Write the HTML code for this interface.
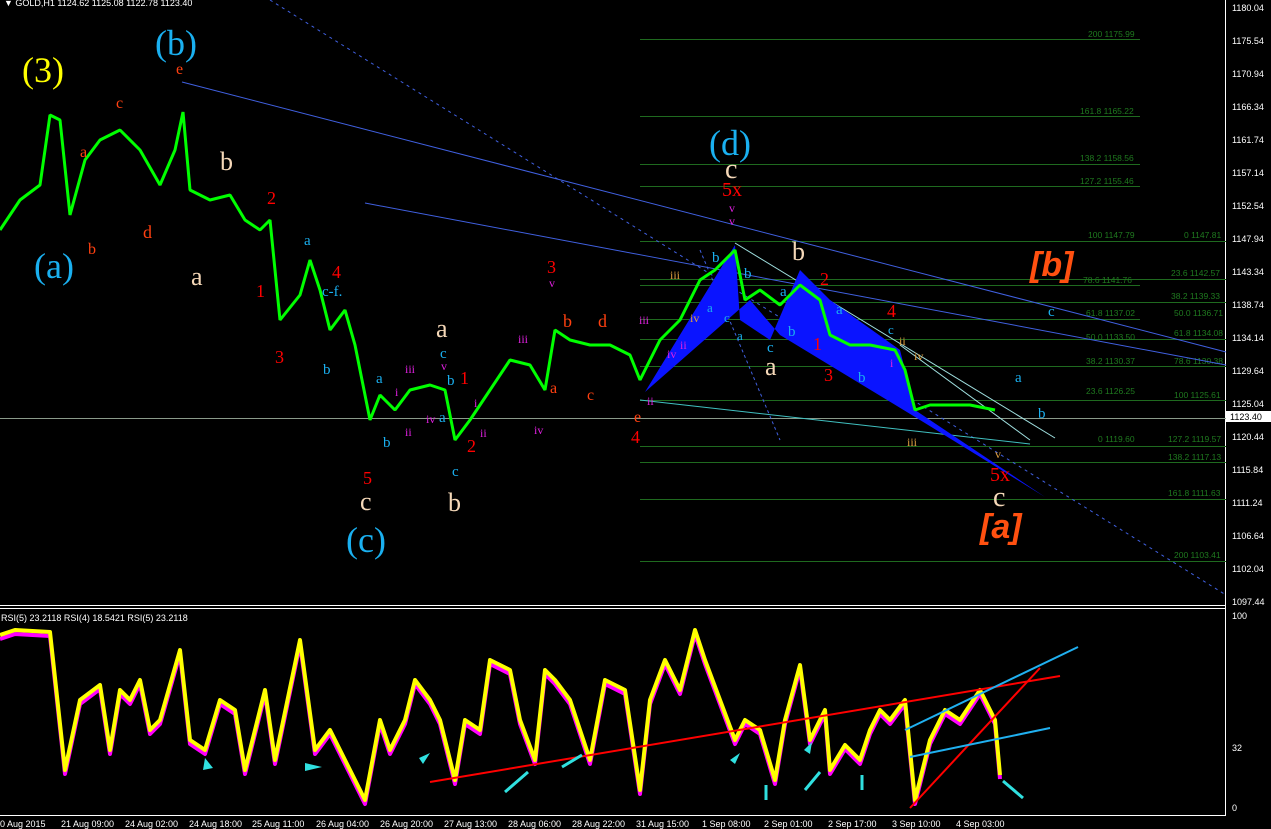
<!DOCTYPE html>
<html><head><meta charset="utf-8"><style>
html,body{margin:0;padding:0;background:#000;width:1271px;height:829px;overflow:hidden}
svg{display:block}
text{font-family:"Liberation Sans",sans-serif}
.ax{fill:#fff;font-size:9px}
.fb text{fill:#1f7a1f;font-size:8.5px}
.s text{font-family:"Liberation Serif",serif}
</style></head><body>
<svg width="1271" height="829" viewBox="0 0 1271 829">
<line x1="1225.5" y1="0" x2="1225.5" y2="815" stroke="#fff"/>
<line x1="0" y1="605.5" x2="1226" y2="605.5" stroke="#fff"/>
<line x1="0" y1="608.5" x2="1226" y2="608.5" stroke="#fff"/>
<line x1="0" y1="815.5" x2="1226" y2="815.5" stroke="#fff"/>
<text x="4" y="6" fill="#fff" font-size="9">▼ GOLD,H1  1124.62 1125.08 1122.78 1123.40</text>
<g class="ax">
<text x="1232" y="11">1180.04</text><text x="1232" y="44">1175.54</text><text x="1232" y="77">1170.94</text><text x="1232" y="110">1166.34</text><text x="1232" y="143">1161.74</text><text x="1232" y="176">1157.14</text><text x="1232" y="209">1152.54</text><text x="1232" y="242">1147.94</text><text x="1232" y="275">1143.34</text><text x="1232" y="308">1138.74</text><text x="1232" y="341">1134.14</text><text x="1232" y="374">1129.64</text><text x="1232" y="407">1125.04</text><text x="1232" y="440">1120.44</text><text x="1232" y="473">1115.84</text><text x="1232" y="506">1111.24</text><text x="1232" y="539">1106.64</text><text x="1232" y="572">1102.04</text><text x="1232" y="605">1097.44</text>
<text x="1232" y="619">100</text><text x="1232" y="751">32</text><text x="1232" y="811">0</text>
</g>
<rect x="1226" y="411" width="45" height="11" fill="#fff"/><text x="1230" y="420" font-size="9" fill="#000">1123.40</text>
<line x1="0" y1="418.5" x2="1226" y2="418.5" stroke="#8a9a8a" stroke-width="1"/>
<g stroke="#1f6a1f" stroke-width="1">
<line x1="640" y1="39.5" x2="1140" y2="39.5"/><line x1="640" y1="116.5" x2="1140" y2="116.5"/><line x1="640" y1="164.5" x2="1140" y2="164.5"/><line x1="640" y1="186.5" x2="1140" y2="186.5"/><line x1="640" y1="241.5" x2="1226" y2="241.5"/><line x1="640" y1="279.5" x2="1226" y2="279.5"/><line x1="640" y1="285.5" x2="1140" y2="285.5"/><line x1="640" y1="302.5" x2="1226" y2="302.5"/><line x1="640" y1="319.5" x2="1140" y2="319.5"/><line x1="640" y1="339.5" x2="1226" y2="339.5"/><line x1="640" y1="366.5" x2="1226" y2="366.5"/><line x1="640" y1="400.5" x2="1226" y2="400.5"/><line x1="640" y1="446.5" x2="1226" y2="446.5"/><line x1="640" y1="462.5" x2="1226" y2="462.5"/><line x1="640" y1="499.5" x2="1226" y2="499.5"/><line x1="640" y1="561.5" x2="1226" y2="561.5"/>
</g>
<g class="fb">
<text x="1088" y="37">200 1175.99</text><text x="1080" y="114">161.8 1165.22</text><text x="1080" y="161">138.2 1158.56</text><text x="1080" y="184">127.2 1155.46</text><text x="1088" y="238">100 1147.79</text><text x="1184" y="238">0 1147.81</text><text x="1083" y="283">78.6 1141.76</text><text x="1171" y="276">23.6 1142.57</text><text x="1171" y="299">38.2 1139.33</text><text x="1086" y="316">61.8 1137.02</text><text x="1174" y="316">50.0 1136.71</text><text x="1086" y="340">50.0 1133.50</text><text x="1174" y="336">61.8 1134.08</text><text x="1086" y="364">38.2 1130.37</text><text x="1174" y="364">78.6 1130.38</text><text x="1086" y="394">23.6 1126.25</text><text x="1174" y="398">100 1125.61</text><text x="1098" y="442">0 1119.60</text><text x="1168" y="442">127.2 1119.57</text><text x="1168" y="460">138.2 1117.13</text><text x="1168" y="496">161.8 1111.63</text><text x="1174" y="558">200 1103.41</text>
</g>
<g stroke="#4060e0" stroke-width="1" fill="none">
<line x1="182" y1="82" x2="1226" y2="352"/>
<line x1="365" y1="203" x2="1226" y2="365"/>
<line x1="270" y1="0" x2="1226" y2="595" stroke-dasharray="3,4"/>
<line x1="640" y1="400" x2="1030" y2="444" stroke="#40c0c0"/>
<line x1="735" y1="243" x2="1055" y2="438" stroke="#a0e0e0"/>
<line x1="900" y1="345" x2="1030" y2="440" stroke="#a0e0e0"/>
<line x1="700" y1="250" x2="780" y2="440" stroke-dasharray="3,3"/>
</g>
<g fill="#0a14ff">
<polygon points="645,392 735,245 740,320 770,340 800,270 830,300 900,350 915,410 1045,497 920,420 780,335 750,300"/>
</g>
<polyline fill="none" stroke="#00ff00" stroke-width="3" stroke-linejoin="bevel" points="0,230 20,200 40,185 50,115 60,120 70,215 85,160 100,140 120,130 140,150 160,185 175,150 183,112 190,190 210,200 230,195 245,220 260,230 270,220 280,320 300,295 310,260 320,290 330,330 345,310 355,345 370,420 380,395 395,410 410,390 430,385 445,390 455,440 470,420 490,390 510,360 530,365 545,390 555,330 570,340 590,345 610,345 630,355 640,380 660,340 680,320 700,280 715,270 735,250 745,300 760,290 780,305 800,285 820,300 830,335 850,345 870,345 895,350 905,370 915,410 930,405 950,405 970,405 995,410"/>
<g class="s">
<text x="22" y="82" fill="#ffff00" font-size="36">(3)</text>
<text x="155" y="55" fill="#1ab0f0" font-size="36">(b)</text>
<text x="34" y="278" fill="#1ab0f0" font-size="36">(a)</text>
<text x="346" y="552" fill="#1ab0f0" font-size="36">(c)</text>
<text x="709" y="155" fill="#1ab0f0" font-size="36">(d)</text>
<text x="176" y="74" fill="#ff4010" font-size="16">e</text>
<text x="116" y="108" fill="#ff4010" font-size="16">c</text>
<text x="80" y="157" fill="#ff4010" font-size="16">a</text>
<text x="88" y="254" fill="#ff4010" font-size="16">b</text>
<text x="143" y="238" fill="#ff4010" font-size="18">d</text>
<text x="220" y="170" fill="#f5d8b8" font-size="26">b</text>
<text x="191" y="285" fill="#f5d8b8" font-size="26">a</text>
<text x="267" y="204" fill="#f00" font-size="18">2</text>
<text x="256" y="297" fill="#f00" font-size="18">1</text>
<text x="275" y="363" fill="#f00" font-size="18">3</text>
<text x="332" y="278" fill="#f00" font-size="18">4</text>
<text x="363" y="484" fill="#f00" font-size="18">5</text>
<text x="360" y="510" fill="#f5d8b8" font-size="26">c</text>
<text x="448" y="511" fill="#f5d8b8" font-size="26">b</text>
<text x="436" y="337" fill="#f5d8b8" font-size="26">a</text>
<text x="460" y="384" fill="#f00" font-size="18">1</text>
<text x="467" y="452" fill="#f00" font-size="18">2</text>
<text x="547" y="273" fill="#f00" font-size="18">3</text>
<text x="631" y="443" fill="#f00" font-size="18">4</text>
<text x="722" y="196" fill="#f00" font-size="20">5x</text>
<text x="725" y="178" fill="#f5d8b8" font-size="28">c</text>
<text x="792" y="260" fill="#f5d8b8" font-size="26">b</text>
<text x="765" y="375" fill="#f5d8b8" font-size="26">a</text>
<text x="820" y="285" fill="#f00" font-size="18">2</text>
<text x="813" y="350" fill="#f00" font-size="18">1</text>
<text x="824" y="381" fill="#f00" font-size="18">3</text>
<text x="887" y="317" fill="#f00" font-size="18">4</text>
<text x="990" y="481" fill="#f00" font-size="20">5x</text>
<text x="993" y="506" fill="#f5d8b8" font-size="28">c</text>
<text x="563" y="327" fill="#ff4010" font-size="18">b</text>
<text x="598" y="327" fill="#ff4010" font-size="18">d</text>
<text x="550" y="393" fill="#ff4010" font-size="16">a</text>
<text x="587" y="400" fill="#ff4010" font-size="16">c</text>
<text x="634" y="422" fill="#ff4010" font-size="16">e</text>
<text x="322" y="296" fill="#1ab0f0" font-size="15">c-f.</text>
<text x="304" y="245" fill="#1ab0f0" font-size="15">a</text>
<text x="323" y="374" fill="#1ab0f0" font-size="15">b</text>
<text x="376" y="383" fill="#1ab0f0" font-size="15">a</text>
<text x="383" y="447" fill="#1ab0f0" font-size="15">b</text>
<text x="440" y="358" fill="#1ab0f0" font-size="15">c</text>
<text x="447" y="385" fill="#1ab0f0" font-size="15">b</text>
<text x="439" y="422" fill="#1ab0f0" font-size="15">a</text>
<text x="452" y="476" fill="#1ab0f0" font-size="15">c</text>
<text x="1048" y="316" fill="#1ab0f0" font-size="15">c</text>
<text x="1015" y="382" fill="#1ab0f0" font-size="15">a</text>
<text x="1038" y="418" fill="#1ab0f0" font-size="15">b</text>
<text x="858" y="382" fill="#1ab0f0" font-size="15">b</text>
<text x="788" y="336" fill="#1ab0f0" font-size="15">b</text>
<text x="767" y="352" fill="#1ab0f0" font-size="15">c</text>
<text x="888" y="334" fill="#1ab0f0" font-size="13">c</text>
<text x="780" y="296" fill="#1ab0f0" font-size="15">a</text>
<text x="836" y="314" fill="#1ab0f0" font-size="15">a</text>
<text x="712" y="262" fill="#1ab0f0" font-size="15">b</text>
<text x="744" y="278" fill="#1ab0f0" font-size="15">b</text>
<text x="707" y="312" fill="#1ab0f0" font-size="13">a</text>
<text x="724" y="322" fill="#1ab0f0" font-size="13">c</text>
<text x="737" y="340" fill="#1ab0f0" font-size="13">a</text>
<text x="405" y="373" fill="#e020e0" font-size="12">iii</text><text x="395" y="396" fill="#e020e0" font-size="12">i</text><text x="405" y="436" fill="#e020e0" font-size="12">ii</text><text x="426" y="423" fill="#e020e0" font-size="12">iv</text><text x="441" y="370" fill="#e020e0" font-size="12">v</text><text x="474" y="407" fill="#e020e0" font-size="12">i</text><text x="480" y="437" fill="#e020e0" font-size="12">ii</text><text x="518" y="343" fill="#e020e0" font-size="12">iii</text><text x="534" y="434" fill="#e020e0" font-size="12">iv</text><text x="549" y="287" fill="#e020e0" font-size="12">v</text><text x="639" y="324" fill="#e020e0" font-size="12">iii</text><text x="647" y="405" fill="#e020e0" font-size="12">ii</text><text x="667" y="358" fill="#e020e0" font-size="12">iv</text><text x="680" y="349" fill="#e020e0" font-size="12">ii</text><text x="729" y="212" fill="#e020e0" font-size="12">v</text><text x="729" y="225" fill="#e020e0" font-size="12">v</text><text x="890" y="367" fill="#e020e0" font-size="12">i</text>
<text x="670" y="279" fill="#e0a040" font-size="12">iii</text><text x="907" y="446" fill="#e0a040" font-size="12">iii</text><text x="914" y="360" fill="#e0a040" font-size="12">iv</text><text x="995" y="458" fill="#e0a040" font-size="12">v</text><text x="690" y="322" fill="#e0a040" font-size="12">iv</text><text x="899" y="345" fill="#e0a040" font-size="12">ii</text>
</g>
<text x="1030" y="276" fill="#ff5010" font-size="34" font-style="italic" font-weight="bold">[b]</text>
<text x="980" y="538" fill="#ff5010" font-size="34" font-style="italic" font-weight="bold">[a]</text>
<text x="1" y="621" fill="#fff" font-size="9">RSI(5) 23.2118  RSI(4) 18.5421  RSI(5) 23.2118</text>
<polyline fill="none" stroke="#ff00ff" stroke-width="4" stroke-linejoin="round" transform="translate(0,4)" points="0,635 15,630 50,632 65,770 80,700 100,685 110,750 120,690 130,700 140,680 150,730 160,720 180,650 190,740 205,750 220,700 235,710 245,770 255,730 265,690 275,760 300,640 315,750 330,730 345,760 365,800 380,720 390,750 405,720 415,680 430,700 440,720 455,780 465,720 480,730 490,660 510,670 520,720 535,760 545,670 555,680 570,700 590,760 605,680 625,690 640,790 650,700 665,660 680,690 695,630 705,660 720,700 735,740 745,720 760,730 775,780 785,720 800,665 810,740 825,710 830,770 845,745 860,760 870,730 880,710 890,720 905,700 915,800 930,740 945,710 960,720 980,690 995,720 1000,775"/>
<polyline fill="none" stroke="#ffff00" stroke-width="4" stroke-linejoin="round" points="0,635 15,630 50,632 65,770 80,700 100,685 110,750 120,690 130,700 140,680 150,730 160,720 180,650 190,740 205,750 220,700 235,710 245,770 255,730 265,690 275,760 300,640 315,750 330,730 345,760 365,800 380,720 390,750 405,720 415,680 430,700 440,720 455,780 465,720 480,730 490,660 510,670 520,720 535,760 545,670 555,680 570,700 590,760 605,680 625,690 640,790 650,700 665,660 680,690 695,630 705,660 720,700 735,740 745,720 760,730 775,780 785,720 800,665 810,740 825,710 830,770 845,745 860,760 870,730 880,710 890,720 905,700 915,800 930,740 945,710 960,720 980,690 995,720 1000,775"/>
<g stroke-width="2" fill="none">
<line x1="430" y1="782" x2="1060" y2="676" stroke="#f00"/>
<line x1="910" y1="808" x2="1040" y2="668" stroke="#f00"/>
<line x1="905" y1="730" x2="1078" y2="647" stroke="#20b0f0"/>
<line x1="910" y1="757" x2="1050" y2="728" stroke="#20b0f0"/>
<g stroke="#30e0e0" stroke-width="3"><line x1="505" y1="792" x2="528" y2="772"/><line x1="562" y1="767" x2="582" y2="755"/><line x1="766" y1="800" x2="766" y2="785"/><line x1="805" y1="790" x2="820" y2="772"/><line x1="862" y1="790" x2="862" y2="775"/><line x1="1023" y1="798" x2="1003" y2="781"/></g>
</g>
<g fill="#30e0e0"><polygon points="205,758 213,768 203,770"/><polygon points="305,763 322,767 305,771"/><polygon points="419,758 430,753 423,764"/><polygon points="730,760 740,753 735,764"/><polygon points="804,750 812,742 810,754"/></g>
<g class="ax">
<text x="0" y="827">0 Aug 2015</text><text x="61" y="827">21 Aug 09:00</text><text x="125" y="827">24 Aug 02:00</text><text x="189" y="827">24 Aug 18:00</text><text x="252" y="827">25 Aug 11:00</text><text x="316" y="827">26 Aug 04:00</text><text x="380" y="827">26 Aug 20:00</text><text x="444" y="827">27 Aug 13:00</text><text x="508" y="827">28 Aug 06:00</text><text x="572" y="827">28 Aug 22:00</text><text x="636" y="827">31 Aug 15:00</text><text x="702" y="827">1 Sep 08:00</text><text x="764" y="827">2 Sep 01:00</text><text x="828" y="827">2 Sep 17:00</text><text x="892" y="827">3 Sep 10:00</text><text x="956" y="827">4 Sep 03:00</text>
</g>
</svg>
</body></html>
